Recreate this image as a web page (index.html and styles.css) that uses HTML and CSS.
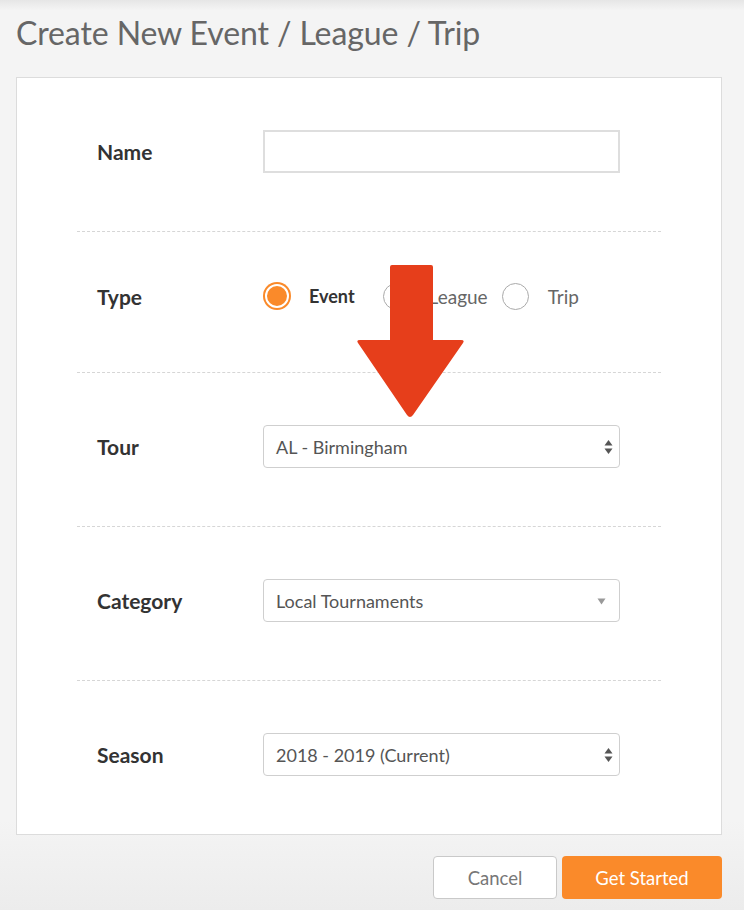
FILE: index.html
```html
<!DOCTYPE html>
<html>
<head>
<meta charset="utf-8">
<link rel="stylesheet" href="styles.css">
</head>
<body>
<div class="page">
  <h1 class="title">Create New Event / League / Trip</h1>
  <div class="card">
    <div class="row">
      <div class="label">Name</div>
      <div class="control"><div class="input"></div></div>
    </div>
    <div class="row row-type">
      <div class="label">Type</div>
      <div class="control radios">
        <span class="radio"><span class="dot checked"></span><span class="rtext bold">Event</span></span>
        <span class="radio"><span class="dot"></span><span class="rtext">League</span></span>
        <span class="radio"><span class="dot"></span><span class="rtext">Trip</span></span>
      </div>
    </div>
    <div class="row">
      <div class="label">Tour</div>
      <div class="control"><div class="select">AL - Birmingham<span class="updown"><svg width="9" height="16" viewBox="0 0 9 16"><path d="M4.5 1 L8.5 6.5 H0.5 Z" fill="#555"/><path d="M4.5 15 L8.5 9.5 H0.5 Z" fill="#555"/></svg></span></div></div>
    </div>
    <div class="row">
      <div class="label">Category</div>
      <div class="control"><div class="select">Local Tournaments<span class="down"><svg width="9" height="7" viewBox="0 0 9 7"><path d="M0.5 0.5 H8.5 L4.5 6.5 Z" fill="#999"/></svg></span></div></div>
    </div>
    <div class="row last">
      <div class="label">Season</div>
      <div class="control"><div class="select">2018 - 2019 (Current)<span class="updown"><svg width="9" height="16" viewBox="0 0 9 16"><path d="M4.5 1 L8.5 6.5 H0.5 Z" fill="#555"/><path d="M4.5 15 L8.5 9.5 H0.5 Z" fill="#555"/></svg></span></div></div>
    </div>
    <svg class="arrow" width="110" height="156" viewBox="0 0 110 156">
      <path d="M33 2 Q33 0 35 0 H74 Q76 0 76 2 V75 H104 Q108 75 106 78 L56 150 Q53 154 50 150 L1 78 Q-1 75 3 75 H33 Z" fill="#e63e1b"/>
    </svg>
  </div>
  <div class="actions">
    <button class="btn cancel">Cancel</button>
    <button class="btn primary">Get Started</button>
  </div>
</div>
</body>
</html>
```
FILE: styles.css
```css
html, body {
  margin: 0;
  padding: 0;
}
body {
  width: 744px;
  height: 910px;
  overflow: hidden;
  background: linear-gradient(to bottom, #e6e6e6 0px, #f4f4f4 10px, #f4f4f4 820px, #ececec 910px);
  font-family: "Lato", "Open Sans", "Liberation Sans", sans-serif;
}
.page {
  padding: 0 22px 0 16px;
}
.title {
  margin: 0;
  padding-top: 13px;
  height: 77px;
  box-sizing: border-box;
  font-size: 32px;
  font-weight: 400;
  color: #666;
  letter-spacing: -0.1px;
}
.card {
  position: relative;
  background: #fff;
  border: 1px solid #dcdcdc;
  padding: 0 60px 0 60px;
  height: 758px;
  box-sizing: border-box;
}
.row {
  display: grid;
  grid-template-columns: 166px 357px;
  align-items: center;
  padding: 52px 0 58px 20px;
  border-bottom: 1px dashed #d6d6d6;
}
.row.row-type {
  padding: 49px 0 61px 20px;
}
.row.last {
  border-bottom: none;
}
.label {
  font-size: 21px;
  font-weight: 700;
  color: #333;
}
.input {
  height: 43px;
  box-sizing: border-box;
  border: 2px solid #dedede;
  background: #fff;
}
.select {
  position: relative;
  height: 43px;
  box-sizing: border-box;
  border: 1px solid #cfcfcf;
  border-radius: 4px;
  padding: 0 12px;
  display: flex;
  align-items: center;
  font-size: 18px;
  color: #555;
}
.updown {
  position: absolute;
  right: 6px;
  top: 13px;
  display: flex;
}
.down {
  position: absolute;
  right: 13px;
  top: 18px;
  display: flex;
}
.radios {
  display: flex;
  align-items: center;
  height: 30px;
}
.radio {
  display: flex;
  align-items: center;
}
.dot {
  width: 27px;
  height: 27px;
  box-sizing: border-box;
  border-radius: 50%;
  border: 1.5px solid #aaa;
  background: #fff;
}
.dot.checked {
  width: 24px;
  height: 24px;
  margin: 2px;
  background: #fa8a2a;
  border: 2px solid #fff;
  box-shadow: 0 0 0 2px #fa8a2a;
}
.rtext {
  font-size: 19px;
  color: #666;
  margin-left: 19px;
  margin-right: 14px;
}
.rtext.bold {
  font-size: 18px;
  font-weight: 700;
  color: #333;
  margin-left: 18px;
  margin-right: 28px;
}
.radio:last-child .rtext {
  margin-right: 0;
}
.arrow {
  position: absolute;
  left: 340px;
  top: 187px;
}
.actions {
  display: flex;
  justify-content: flex-end;
  gap: 5px;
  margin-top: 21px;
}
.btn {
  height: 43px;
  border-radius: 4px;
  font-family: inherit;
  font-size: 18.5px;
  box-sizing: border-box;
}
.cancel {
  width: 124px;
  background: #fff;
  border: 1px solid #c9c9c9;
  color: #777;
}
.primary {
  width: 160px;
  background: #fa8a2a;
  border: none;
  color: #fff;
}
```
